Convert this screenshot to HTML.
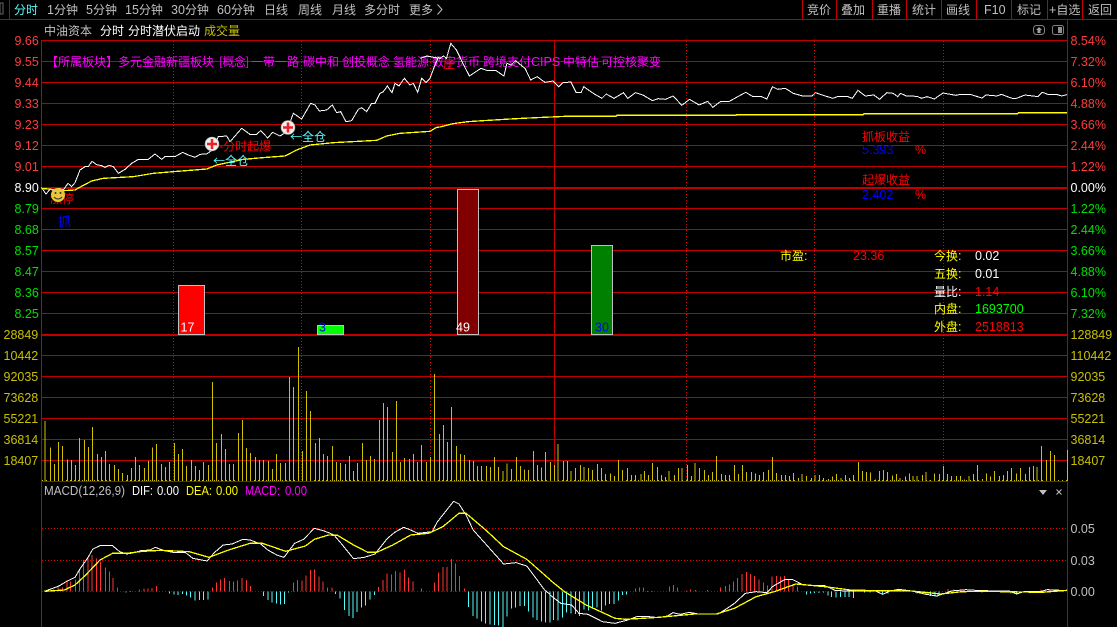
<!DOCTYPE html>
<html><head><meta charset="utf-8"><style>
html,body{margin:0;padding:0;background:#000;width:1117px;height:627px;overflow:hidden}
svg{display:block}
text{font-family:"WenQuanYi Zen Hei","Noto Sans CJK SC",sans-serif;font-size:12px;fill:#c0c0c0}
text.n,tspan.n{font-family:"Liberation Sans",sans-serif;font-size:12.5px}
.r{fill:#ff3c3c}.g{fill:#00e000}.w{fill:#fff}.o{fill:#c8c000}.y{fill:#ff0}.m{fill:#f0f}.R{fill:#f00}.b{fill:#00f}.c{fill:#5ff}
.l{fill:none;vector-effect:non-scaling-stroke;stroke-width:1;shape-rendering:crispEdges}
.t{stroke-width:1.3}
</style></head><body>
<svg width="1117" height="627" viewBox="0 0 1117 627" xmlns="http://www.w3.org/2000/svg">
<rect width="1117" height="627" fill="#000"/>
<g stroke="#c00000" stroke-width="1" shape-rendering="crispEdges" fill="none">
<path d="M0 19.5H1117M9.5 0V19M802.5 0V19M836.5 0V19M872.5 0V19M906.5 0V19M941.5 0V19M976.5 0V19M1011.5 0V19M1047.5 0V19M1082.5 0V19"/>
<path d="M41.5 40V627M1067.5 19.5V627"/>
<path d="M41 40.5H1067M41 61.5H1067M41 82.5H1067M41 103.5H1067M41 124.5H1067M41 145.5H1067M41 166.5H1067M41 208.5H1067M41 229.5H1067M41 250.5H1067M41 271.5H1067M41 292.5H1067M41 313.5H1067M41 355.5H1067M41 376.5H1067M41 397.5H1067M41 418.5H1067M41 439.5H1067M41 460.5H1067M41 481.5H1067"/>
<path d="M41 188H1067M41 335H1067" stroke-width="2"/>
<path d="M554.5 41V481"/>
<path d="M173.5 41V481M301.5 41V481M430.5 41V481M686.5 41V481M814.5 41V481M943.5 41V481" stroke="#e00000" stroke-dasharray="1 2"/>
<path d="M42 528.5H1067M42 560.5H1067" stroke="#e00000" stroke-dasharray="1 2"/>
<path d="M42 591.5H1067" stroke="#a00000" stroke-dasharray="1 2"/>
</g>
<path d="M42 480.5H1067" stroke="#d0c000" stroke-dasharray="1 3" shape-rendering="crispEdges"/>

<!-- top bar -->
<rect x="0" y="3" width="3" height="11" fill="none" stroke="#666" stroke-width="1" shape-rendering="crispEdges"/>
<text x="14" y="14" class="c">分时</text>
<text x="47" y="14"><tspan class="n">1</tspan>分钟</text>
<text x="86" y="14"><tspan class="n">5</tspan>分钟</text>
<text x="125" y="14"><tspan class="n">15</tspan>分钟</text>
<text x="171" y="14"><tspan class="n">30</tspan>分钟</text>
<text x="217" y="14"><tspan class="n">60</tspan>分钟</text>
<text x="264" y="14">日线</text>
<text x="298" y="14">周线</text>
<text x="332" y="14">月线</text>
<text x="364" y="14">多分时</text>
<text x="409" y="14">更多</text>
<path d="M437.5 4.5L442 9.5L437.5 14.5" fill="none" stroke="#c0c0c0"/>
<text x="807" y="14">竞价</text>
<text x="841" y="14">叠加</text>
<text x="877" y="14">重播</text>
<text x="912" y="14">统计</text>
<text x="946" y="14">画线</text>
<text x="984" y="14" class="n">F10</text>
<text x="1017" y="14">标记</text>
<text x="1049" y="14"><tspan class="n">+</tspan>自选</text>
<text x="1088" y="14">返回</text>

<text x="44" y="35">中油资本</text>
<text x="100" y="35" class="w">分时</text>
<text x="128" y="35" class="w">分时潜伏启动</text>
<text x="204" y="35" class="o">成交量</text>

<rect x="1033.5" y="25.5" width="11" height="9" rx="3" fill="none" stroke="#808080"/>
<path d="M1039 27L1042 30H1040.5V33H1037.5V30H1036Z" fill="#a0a0a0"/>
<rect x="1052.5" y="25.5" width="11" height="9" rx="2" fill="none" stroke="#808080"/>
<rect x="1058" y="27" width="4" height="6" fill="#909090"/>

<!-- left axis -->
<text x="14.5" y="45" class="n r">9.66</text><text x="14.5" y="66" class="n r">9.55</text><text x="14.5" y="87" class="n r">9.44</text><text x="14.5" y="108" class="n r">9.33</text><text x="14.5" y="129" class="n r">9.23</text><text x="14.5" y="150" class="n r">9.12</text><text x="14.5" y="171" class="n r">9.01</text>
<text x="14.5" y="192" class="n w">8.90</text>
<text x="14.5" y="213" class="n g">8.79</text><text x="14.5" y="234" class="n g">8.68</text><text x="14.5" y="255" class="n g">8.57</text><text x="14.5" y="276" class="n g">8.47</text><text x="14.5" y="297" class="n g">8.36</text><text x="14.5" y="318" class="n g">8.25</text>
<text x="3.5" y="339" class="n o">28849</text><text x="3.5" y="360" class="n o">10442</text><text x="3.5" y="381" class="n o">92035</text><text x="3.5" y="402" class="n o">73628</text><text x="3.5" y="423" class="n o">55221</text><text x="3.5" y="444" class="n o">36814</text><text x="3.5" y="465" class="n o">18407</text>
<!-- right axis -->
<text x="1070.5" y="45" class="n r">8.54%</text><text x="1070.5" y="66" class="n r">7.32%</text><text x="1070.5" y="87" class="n r">6.10%</text><text x="1070.5" y="108" class="n r">4.88%</text><text x="1070.5" y="129" class="n r">3.66%</text><text x="1070.5" y="150" class="n r">2.44%</text><text x="1070.5" y="171" class="n r">1.22%</text>
<text x="1070.5" y="192" class="n w">0.00%</text>
<text x="1070.5" y="213" class="n g">1.22%</text><text x="1070.5" y="234" class="n g">2.44%</text><text x="1070.5" y="255" class="n g">3.66%</text><text x="1070.5" y="276" class="n g">4.88%</text><text x="1070.5" y="297" class="n g">6.10%</text><text x="1070.5" y="318" class="n g">7.32%</text>
<text x="1070.5" y="339" class="n o">128849</text><text x="1070.5" y="360" class="n o">110442</text><text x="1070.5" y="381" class="n o">92035</text><text x="1070.5" y="402" class="n o">73628</text><text x="1070.5" y="423" class="n o">55221</text><text x="1070.5" y="444" class="n o">36814</text><text x="1070.5" y="465" class="n o">18407</text>
<text x="1070.5" y="533" class="n">0.05</text><text x="1070.5" y="565" class="n">0.03</text><text x="1070.5" y="596" class="n">0.00</text>

<!-- bars -->
<g stroke="#c0c0c0" shape-rendering="crispEdges">
<rect x="178.5" y="285.5" width="26" height="49" fill="#f00"/>
<rect x="317.5" y="325.5" width="26" height="9" fill="#0f0"/>
<rect x="457.5" y="189.5" width="21" height="145" fill="#800000"/>
<rect x="591.5" y="245.5" width="21" height="89" fill="#008000"/>
</g>
<text x="180.5" y="331.5" class="n w">17</text>
<text x="319" y="331.5" class="n b">3</text>
<text x="456" y="331.5" class="n w">49</text>
<text x="595" y="331.5" class="n b">30</text>

<!-- magenta concept text -->
<g>
<text x="46" y="66" class="m">【所属板块】</text>
<text x="118" y="66" class="m">多元金融新疆板块</text>
<text x="219" y="66" class="m" style="letter-spacing:-.6px">[概念]</text>
<text x="251" y="66" class="m">一带一路</text>
<text x="303" y="66" class="m">碳中和</text>
<text x="342" y="66" class="m">创投概念</text>
<text x="393" y="66" class="m">氢能源</text>
<text x="432" y="66" class="m">数字货币</text>
<text x="483" y="66" class="m">跨境支付</text>
<text x="531" y="66" class="m n">CIPS</text>
<text x="563" y="66" class="m">中特估</text>
<text x="601" y="66" class="m">可控核聚变</text>
</g>
<text x="443" y="68" class="R">庄</text>

<!-- price line -->
<path class="l" stroke="#fff" transform="scale(.33333)" d="M124 562L138 582L150 568L165 572L178 565L190 570L204 550L215 560L225 548L240 510L255 500L265 500L276 484L290 494L305 497L315 502L328 496L340 500L355 520L375 508L395 490L415 478L445 478L465 462L485 478L495 470L525 470L548 457L565 465L585 472L600 463L620 462L640 448L655 410L680 408L690 425L725 385L750 403L770 403L782 392L803 414L818 397L840 408L860 395L880 340L905 357L932 310L945 315L958 333L980 330L997 315L1010 338L1022 335L1038 365L1055 362L1075 328L1085 323L1100 335L1115 310L1125 310L1140 280L1150 275L1162 258L1176 278L1185 250L1197 258L1213 235L1230 255L1240 250L1253 277L1265 235L1278 247L1290 235L1305 195L1315 172L1320 175"/>
<path class="l" stroke="#fff" transform="translate(440 0) scale(.43176 .33333)" d="M-46 175L-30 168L-15 172L0 175L8 168L15 175L25 130L38 150L55 195L68 228L95 205L110 212L130 212L148 228L155 190L165 195L175 182L190 198L197 205L210 240L225 230L243 247L262 243L275 260L285 248L303 246L315 277L327 277L333 260L355 280L375 295L385 282L403 295L425 278L435 295L453 278L470 285L492 302L505 296L522 298L540 288L560 316L578 298L600 315L620 304L632 322L650 304L670 304L708 277L725 290L745 290L757 297L770 260L782 268L800 265L818 280L840 288L862 288L870 278L885 285L910 295L920 290L945 290L955 295L968 271L985 288L1005 285L1018 298L1035 278L1050 280L1060 290L1067 280L1080 288L1105 289L1115 295L1128 290L1145 297L1165 279L1195 286L1205 283L1230 284L1255 294L1265 285L1290 288L1300 283L1325 295L1335 295L1355 285L1385 290L1395 277L1410 284L1430 284L1440 288L1452 284"/>
<path class="l t" stroke="#ff0" transform="scale(.33333)" d="M124 565L190 572L225 570L250 556L275 543L310 535L400 530L460 520L520 515L620 507L650 495L730 478L800 472L855 468L890 450L930 435L1000 428L1130 421L1160 408L1200 400L1290 394L1310 382L1320 381"/>
<path class="l t" stroke="#ff0" transform="translate(440 0) scale(.43176 .33333)" d="M0 381L30 371L65 365L100 362L150 358L190 355L240 352L290 349L408 349L410 346L685 346L687 344L980 344L982 341L1338 341L1340 338L1452 338"/>

<!-- signals -->
<text x="50" y="203" class="R">涨停</text>
<circle cx="58" cy="195" r="7" fill="#e8c83a"/>
<circle cx="55.5" cy="193" r="1" fill="#333"/><circle cx="60.5" cy="193" r="1" fill="#333"/>
<path d="M54 197Q58 201 62 197" fill="none" stroke="#333"/>
<text x="58" y="226" class="b" style="font-size:13px">抓</text>
<circle cx="212" cy="144" r="7" fill="#eee" stroke="#999" stroke-width=".6"/><path d="M207 144H217M212 139V149" stroke="#f02020" stroke-width="2.5"/>
<circle cx="288" cy="127.5" r="7" fill="#eee" stroke="#999" stroke-width=".6"/><path d="M283 127.5H293M288 122.5V132.5" stroke="#f02020" stroke-width="2.5"/>
<text x="219" y="150.5" class="R"><tspan class="n">-</tspan>分时起爆</text>
<text x="213" y="165" class="c"><tspan>←</tspan>全仓</text>
<text x="290" y="141" class="c"><tspan>←</tspan>全仓</text>

<!-- right side info -->
<text x="862" y="141" class="R">抓板收益</text>
<text x="862" y="154" class="n b">5.393</text><text x="915" y="154" class="n R">%</text>
<text x="862" y="184" class="R">起爆收益</text>
<text x="862" y="199" class="n b">2.402</text><text x="915" y="199" class="n R">%</text>
<text x="780" y="260" class="y">市盈<tspan class="n">:</tspan></text>
<text x="853" y="260" class="n R">23.36</text>
<text x="934" y="260" class="y">今换<tspan class="n">:</tspan></text><text x="975" y="260" class="n w">0.02</text>
<text x="934" y="278" class="y">五换<tspan class="n">:</tspan></text><text x="975" y="278" class="n w">0.01</text>
<text x="934" y="296" class="w">量比<tspan class="n">:</tspan></text><text x="975" y="296" class="n R">1.14</text>
<text x="934" y="313" class="y">内盘<tspan class="n">:</tspan></text><text x="975" y="313" class="n" style="fill:#0f0">1693700</text>
<text x="934" y="331" class="y">外盘<tspan class="n">:</tspan></text><text x="975" y="331" class="n R">2518813</text>

<!-- volume -->
<path class="l" stroke="#d0c000" transform="translate(0 200) scale(.33333)" d="M135 663V843M151 743V843M163 792V843M175 726V843M187 738V843M202 778V843M214 780V843M226 795V843M238 714V843M253 720V843M265 741V843M277 681V843M292 762V843M304 771V843M316 753V843M328 792V843M343 795V843M355 807V843M367 819V843M382 825V843M394 804V843M406 771V843M418 795V843M433 804V843M445 783V843M457 743V843M469 732V843M484 792V843M496 801V843M508 786V843M523 729V843M535 762V843M547 747V843M559 798V843M574 780V843M586 798V843M598 810V843M610 786V843M625 795V843M637 546V843M649 729V843M664 702V843M676 747V843M688 792V843M700 792V843M715 699V843M727 660V843M739 744V843M751 759V843M766 771V843M778 780V843M790 780V843M805 783V843M817 807V843M829 762V843M841 789V843M856 789V843M868 531V843M880 561V843M895 441V843M907 753V843M919 573V843M931 633V843M946 729V843M958 714V843M970 762V843M982 768V843M997 738V843M1009 786V843M1021 789V843M1036 792V843M1048 768V843M1060 813V843M1072 789V843M1087 729V843M1099 780V843M1111 768V843M1123 777V843M1138 660V843M1150 609V843M1162 621V843M1177 756V843M1189 603V843M1201 786V843M1213 774V843M1228 777V843M1240 762V843M1252 786V843M1264 735V843M1279 786V843M1291 771V843M1303 522V843M1318 702V843M1330 675V843M1342 726V843M1354 621V843M1369 738V843M1381 762V843M1393 765V843M1408 780V843M1420 783V843M1432 798V843M1444 798V843M1459 798V843M1471 801V843M1483 771V843M1495 801V843"/>
<path class="l" stroke="#d0c000" transform="translate(500 200) scale(.39355 .33333)" d="M8 813V843M18 790V843M29 807V843M42 771V843M52 798V843M62 808V843M72 810V843M85 753V843M95 795V843M105 802V843M115 756V843M128 786V843M138 795V843M148 732V843M161 783V843M171 783V843M181 813V843M192 804V843M204 795V843M214 801V843M225 804V843M235 810V843M248 792V843M258 804V843M268 822V843M281 820V843M291 828V843M301 780V843M311 810V843M324 804V843M334 825V843M344 825V843M358 822V843M367 813V843M377 825V843M387 789V843M400 801V843M410 825V843M420 831V843M430 813V843M443 825V843M453 804V843M463 804V843M476 795V843M486 828V843M496 789V843M507 804V843M520 810V843M530 825V843M540 816V843M550 768V843M563 822V843M573 825V843M583 825V843M596 795V843M606 822V843M616 795V843M626 816V843M639 816V843M649 820V843M659 825V843M669 816V843M682 810V843M692 771V843M702 819V843M715 825V843M725 825V843M735 828V843M746 819V843M758 834V843M768 822V843M779 828V843M791 834V843M801 825V843M812 825V843M822 834V843M835 837V843M845 830V843M855 822V843M866 834V843M878 825V843M888 834V843M898 825V843M911 786V843M921 813V843M931 816V843M941 818V843M954 838V843M964 813V843M974 810V843M984 816V843M997 826V843M1007 822V843M1017 834V843M1030 830V843M1040 820V843M1050 828V843M1060 828V843M1073 825V843M1083 816V843M1093 840V843M1104 820V843M1117 822V843M1127 798V843M1137 822V843M1147 828V843M1160 828V843M1170 828V843M1180 838V843M1192 828V843M1203 822V843M1213 795V843M1226 837V843M1236 820V843M1246 830V843M1256 813V843M1269 828V843M1279 825V843M1289 813V843M1300 804V843M1312 820V843M1322 804V843M1335 822V843M1345 801V843M1355 798V843M1365 801V843M1376 738V843M1389 780V843M1399 753V843M1409 765V843M1419 840V843M1442 750V843"/>

<!-- MACD header -->
<text x="44" y="495" class="n" textLength="81" lengthAdjust="spacingAndGlyphs">MACD(12,26,9)</text>
<text x="132" y="495" class="n w" textLength="21" lengthAdjust="spacingAndGlyphs">DIF:</text><text x="157" y="495" class="n w" textLength="22" lengthAdjust="spacingAndGlyphs">0.00</text>
<text x="186" y="495" class="n y" textLength="26" lengthAdjust="spacingAndGlyphs">DEA:</text><text x="216" y="495" class="n y" textLength="22" lengthAdjust="spacingAndGlyphs">0.00</text>
<text x="245" y="495" class="n m" textLength="35" lengthAdjust="spacingAndGlyphs">MACD:</text><text x="285" y="495" class="n m" textLength="22" lengthAdjust="spacingAndGlyphs">0.00</text>
<path d="M1039 490H1047L1043 495Z" fill="#c0c0c0"/>
<path d="M1056.5 489.5L1061.5 494.5M1061.5 489.5L1056.5 494.5" stroke="#c0c0c0" fill="none"/>

<!-- MACD histogram -->
<path class="l" stroke="#ff3232" transform="translate(0 480) scale(.35714 .33333)" d="M137 334V330M150 334V328M163 334V316M175 334V322M187 334V300M198 334V305M211 334V298M222 334V270M234 334V240M246 334V232M258 334V225M270 334V235M282 334V245M295 334V262M307 334V275M317 334V294M329 334V323M391 334V328M403 334V326M414 334V326M426 334V324M438 334V318M595 334V322M606 334V308M617 334V298M629 334V294M642 334V303M654 334V305M665 334V302M677 334V294M690 334V300M702 334V318M822 334V308M833 334V300M845 334V302M857 334V287M869 334V270M881 334V269M893 334V290M905 334V305M917 334V322M929 334V322M1060 334V321M1072 334V300M1084 334V280M1096 334V284M1108 334V273M1120 334V278M1132 334V269M1144 334V293M1156 334V305M1180 334V326M1216 334V308M1228 334V278M1240 334V261M1252 334V261M1264 334V237M1276 334V250M1287 334V288M1300 334V326"/>
<path class="l" stroke="#54fcfc" transform="translate(0 480) scale(.35714 .33333)" d="M353 334V337M365 334V336M475 334V341M487 334V343M498 334V345M511 334V342M522 334V346M534 334V352M546 334V362M558 334V360M570 334V360M582 334V358M738 334V348M750 334V360M762 334V367M774 334V370M786 334V374M797 334V372M808 334V338M940 334V342M952 334V355M964 334V390M977 334V408M989 334V414M1000 334V396M1012 334V382M1024 334V376M1036 334V358M1048 334V345M1312 334V381M1324 334V408M1336 334V416M1348 334V425M1360 334V430M1372 334V433M1384 334V435M1396 334V436M1408 334V441M1420 334V410M1432 334V386M1444 334V382M1456 334V378M1468 334V378M1480 334V395M1492 334V412M1504 334V420M1516 334V425M1528 334V428M1540 334V428"/>
<path class="l" stroke="#54fcfc" transform="translate(550 480) scale(.36166 .33333)" d="M10 334V420M22 334V422M34 334V412M46 334V398M58 334V400M70 334V402M82 334V408M94 334V388M106 334V392M118 334V385M130 334V383M142 334V392M154 334V376M165 334V372M177 334V372M189 334V362M200 334V345M212 334V343M270 334V336M282 334V336M709 334V343M720 334V341M732 334V339M744 334V339M756 334V337M768 334V347M779 334V351M791 334V352M803 334V351M815 334V351M827 334V351M839 334V354M870 334V337M885 334V338M920 334V343M935 334V340M1015 334V340M1030 334V340M1040 334V345M1052 334V348M1064 334V350M1075 334V347M1195 334V338M1275 334V340M1290 334V344M1300 334V340"/>
<path class="l" stroke="#ff3232" transform="translate(550 480) scale(.36166 .33333)" d="M236 334V325M247 334V323M258 334V323M330 334V320M341 334V315M352 334V323M378 334V331M389 334V328M403 334V330M435 334V330M472 334V323M485 334V318M496 334V314M507 334V304M519 334V294M531 334V282M543 334V276M555 334V282M566 334V288M578 334V298M590 334V308M602 334V316M614 334V290M626 334V288M638 334V290M648 334V288M660 334V300M672 334V313M684 334V320M965 334V328M975 334V328M1100 334V327M1115 334V329M1135 334V328M1145 334V328M1160 334V328M1358 334V328M1370 334V328M1380 334V327M1395 334V328"/>

<!-- MACD lines -->
<path class="l" stroke="#fff" transform="translate(0 480) scale(.35714 .33333)" d="M124 334L140 328L165 318L185 305L210 292L225 265L245 235L260 207L280 197L315 197L335 215L355 222L375 218L395 212L420 210L435 202L460 212L490 218L520 218L540 235L580 243L600 218L625 195L650 192L680 178L700 180L730 192L750 210L775 225L795 232L825 190L850 178L880 145L905 152L920 158L935 165L955 190L990 236L1020 232L1050 222L1085 175L1105 157L1130 142L1150 150L1170 160L1210 155L1225 125L1245 98L1270 64L1285 72L1305 105L1325 150L1400 240L1410 252L1445 248L1475 258L1525 330L1540 343"/>
<path class="l" stroke="#fff" transform="translate(550 480) scale(.36166 .33333)" d="M0 345L30 370L60 375L80 400L105 403L145 425L180 430L215 420L240 410L265 409L300 413L325 408L340 398L360 403L385 397L410 402L465 402L490 385L510 370L540 340L570 335L600 338L615 320L650 298L670 298L700 315L760 317L790 332L850 333L900 333L920 343L940 333L965 328L1000 333L1040 343L1070 348L1110 333L1150 329L1190 332L1270 333L1290 342L1310 335L1355 335L1375 329L1430 332"/>
<path class="l t" stroke="#ff0" transform="translate(0 480) scale(.35714 .33333)" d="M124 334L180 330L210 315L240 285L280 240L315 220L355 220L400 214L450 211L530 215L585 232L640 210L700 190L735 190L800 214L855 198L880 178L920 165L945 166L990 195L1030 217L1055 217L1100 195L1150 165L1200 160L1240 140L1285 100L1305 100L1360 150L1410 200L1475 238L1540 299"/>
<path class="l t" stroke="#ff0" transform="translate(550 480) scale(.36166 .33333)" d="M0 300L40 335L100 375L180 415L210 418L300 412L400 402L460 402L510 385L570 350L620 335L680 312L760 320L830 330L900 332L1000 333L1080 342L1140 335L1200 334L1360 337L1430 331"/>
</svg>
</body></html>
